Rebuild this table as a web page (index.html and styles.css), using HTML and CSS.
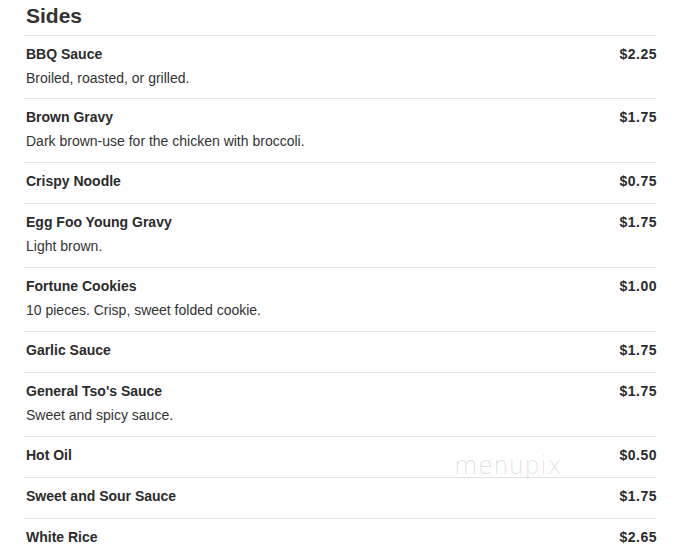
FILE: index.html
```html
<!DOCTYPE html>
<html>
<head>
<meta charset="utf-8">
<link rel="stylesheet" href="styles.css">
</head>
<body>
<div class="menu">
  <h2 class="title">Sides</h2>
  <div class="row"><div class="info"><div class="name">BBQ Sauce</div><div class="desc">Broiled, roasted, or grilled.</div></div><div class="price">$2.25</div></div>
  <div class="row"><div class="info"><div class="name">Brown Gravy</div><div class="desc">Dark brown-use for the chicken with broccoli.</div></div><div class="price">$1.75</div></div>
  <div class="row"><div class="info"><div class="name">Crispy Noodle</div></div><div class="price">$0.75</div></div>
  <div class="row"><div class="info"><div class="name">Egg Foo Young Gravy</div><div class="desc">Light brown.</div></div><div class="price">$1.75</div></div>
  <div class="row"><div class="info"><div class="name">Fortune Cookies</div><div class="desc">10 pieces. Crisp, sweet folded cookie.</div></div><div class="price">$1.00</div></div>
  <div class="row"><div class="info"><div class="name">Garlic Sauce</div></div><div class="price">$1.75</div></div>
  <div class="row"><div class="info"><div class="name">General Tso's Sauce</div><div class="desc">Sweet and spicy sauce.</div></div><div class="price">$1.75</div></div>
  <div class="row"><div class="info"><div class="name">Hot Oil</div></div><div class="price">$0.50</div></div>
  <div class="row"><div class="info"><div class="name">Sweet and Sour Sauce</div></div><div class="price">$1.75</div></div>
  <div class="row"><div class="info"><div class="name">White Rice</div></div><div class="price">$2.65</div></div>
  <div class="watermark">menupix</div>
</div>
</body>
</html>
```
FILE: styles.css
```css
html, body {
  margin: 0;
  padding: 0;
  background: #fff;
}
body {
  font-family: "Liberation Sans", Arial, sans-serif;
  color: #333;
}
.menu {
  position: relative;
  margin-left: 24px;
  width: 632px;
}
.title {
  margin: 0 0 4px 2px;
  padding-top: 1px;
  font-size: 21px;
  line-height: 30px;
  font-weight: bold;
  color: #333;
}
.row {
  display: flex;
  justify-content: space-between;
  border-top: 1px solid #e5e5e5;
  padding: 8px 0 12px 2px;
}
.row .desc {
  margin-top: 4px;
}
.row:has(.desc) {
  padding-bottom: 11px;
}
.title + .row {
  padding-bottom: 10px;
}
.name {
  font-size: 14px;
  font-weight: bold;
  line-height: 20px;
  color: #2b2b2b;
}
.desc {
  font-size: 14px;
  line-height: 20px;
  color: #333;
}
.price {
  font-size: 14px;
  font-weight: bold;
  letter-spacing: 0.5px;
  margin-right: -1px;
  line-height: 20px;
  color: #2b2b2b;
}
.watermark {
  position: absolute;
  left: 430px;
  top: 452px;
  font-family: "DejaVu Sans", sans-serif;
  font-weight: 200;
  font-size: 24px;
  letter-spacing: 0.5px;
  color: rgba(0, 0, 0, 0.14);
}
```
